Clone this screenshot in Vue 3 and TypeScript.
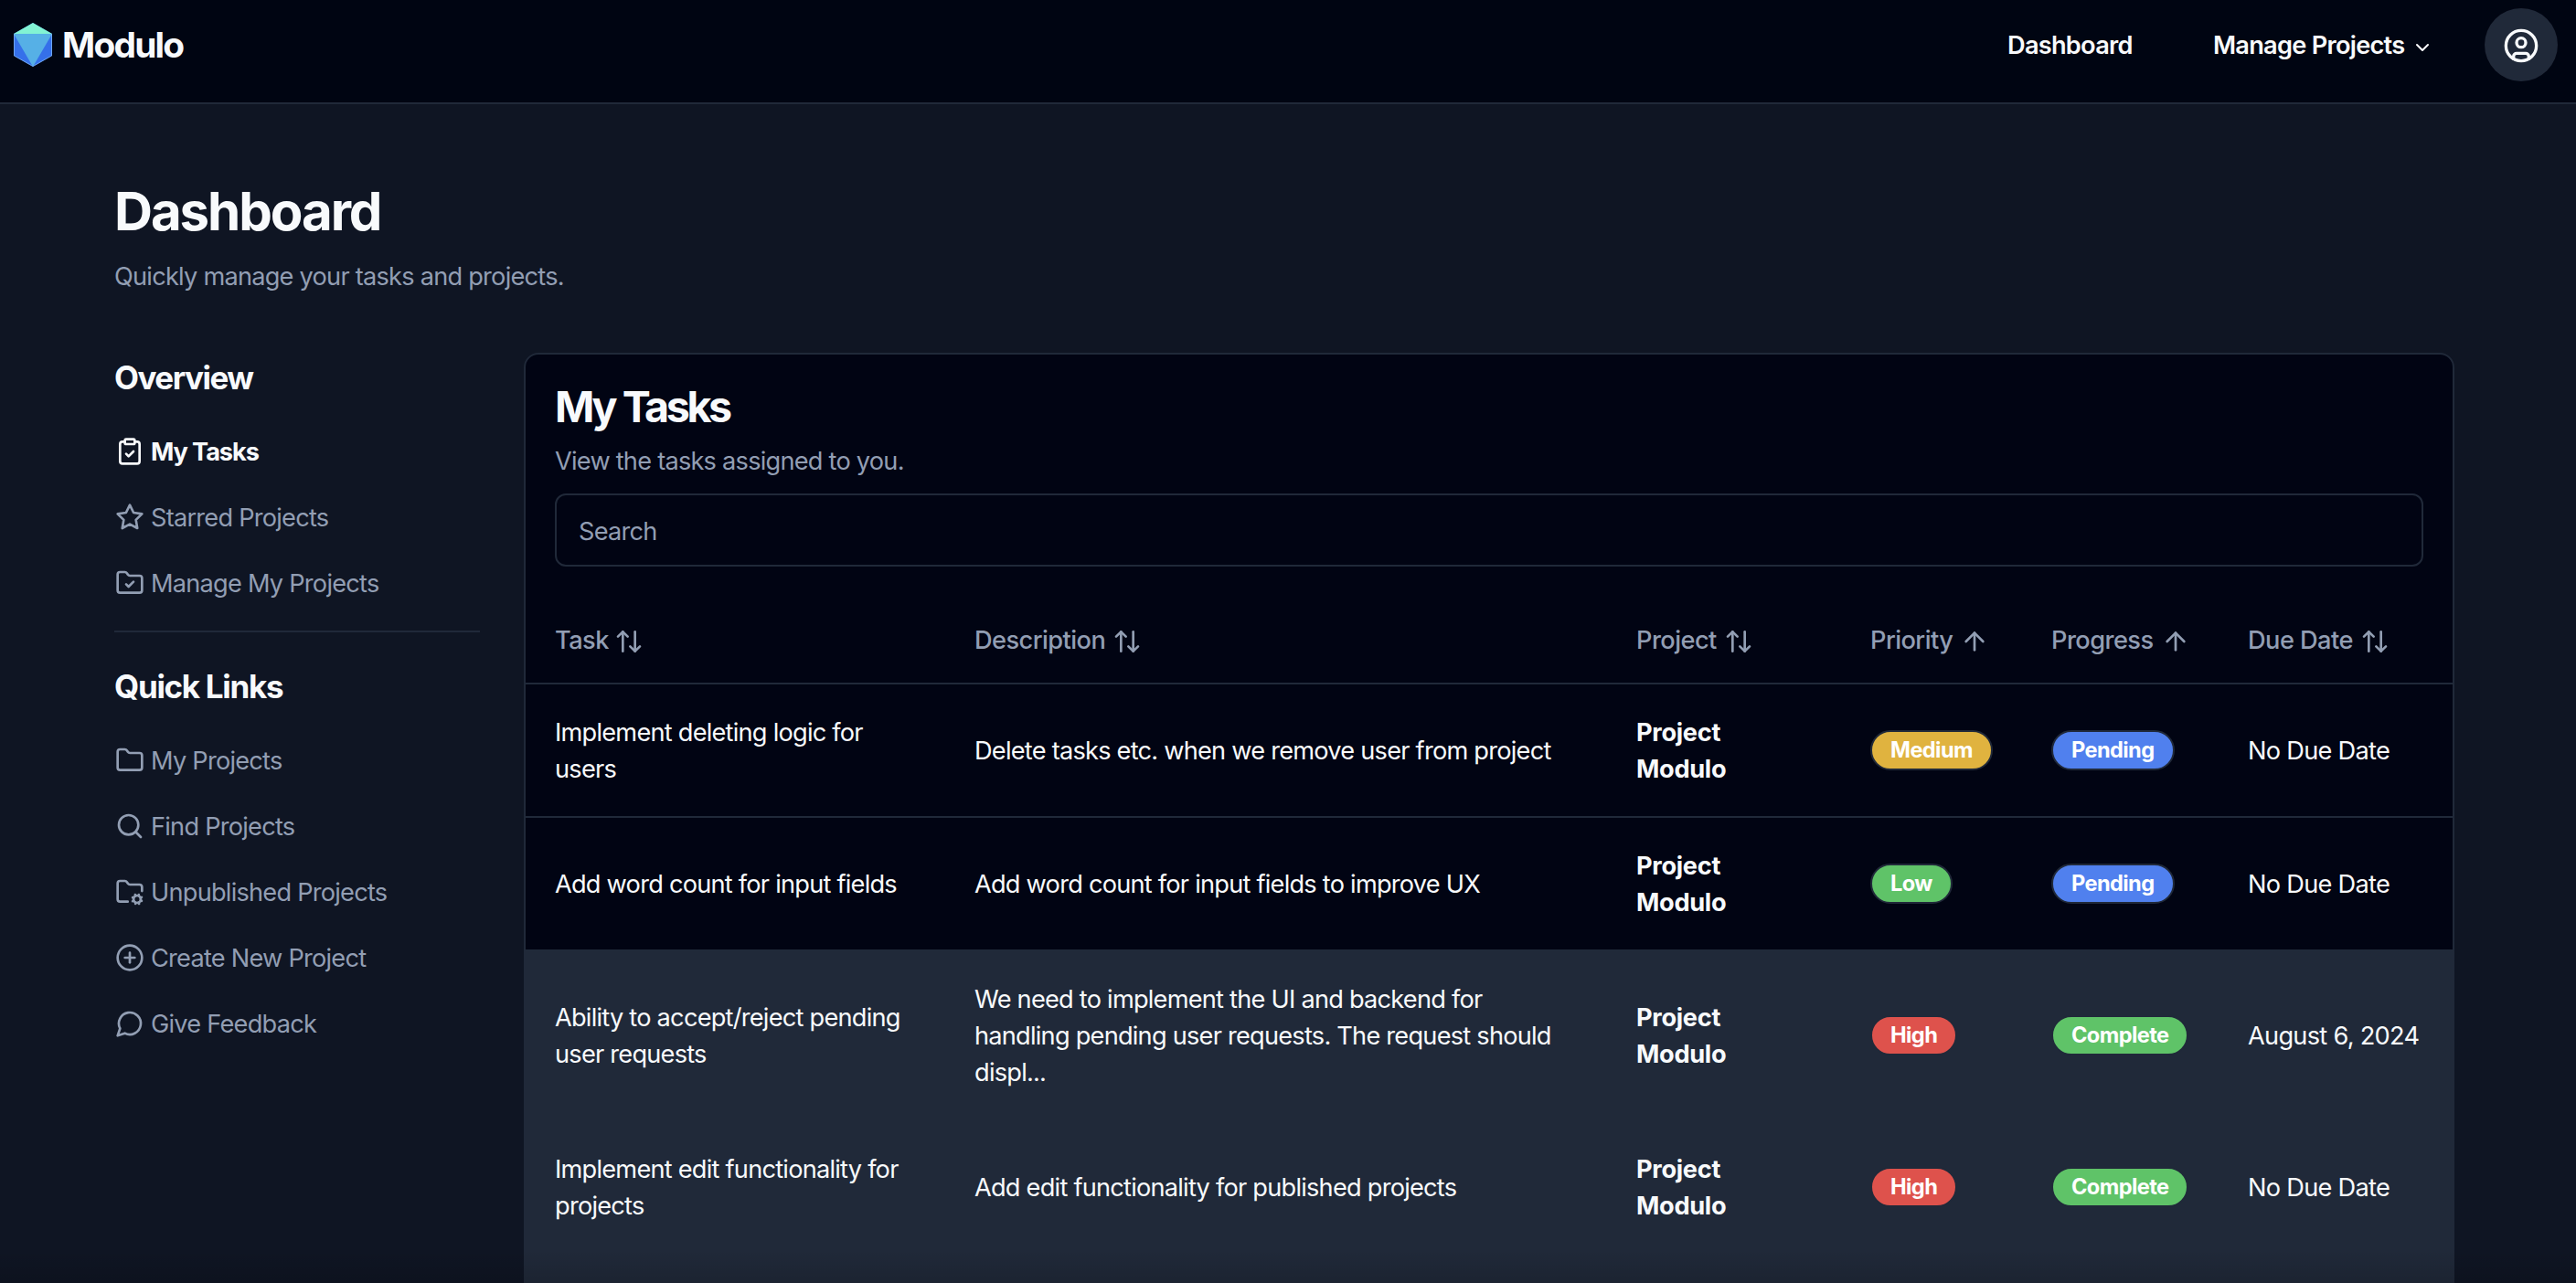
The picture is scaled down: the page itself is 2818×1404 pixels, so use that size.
<script setup lang="ts">
import { h, type FunctionalComponent } from 'vue'

type IconName =
  | 'clipboard' | 'star' | 'folderCheck' | 'folder' | 'search' | 'folderCog'
  | 'plus' | 'message' | 'sort' | 'up' | 'chevron' | 'user'

const shapes: Record<IconName, string> = {
  clipboard:
    '<rect width="8" height="4" x="8" y="2" rx="1" ry="1"/><path d="M16 4h2a2 2 0 0 1 2 2v14a2 2 0 0 1-2 2H6a2 2 0 0 1-2-2V6a2 2 0 0 1 2-2h2"/><path d="m9 14 2 2 4-4"/>',
  star: '<polygon points="12 2 15.09 8.26 22 9.27 17 14.14 18.18 21.02 12 17.77 5.82 21.02 7 14.14 2 9.27 8.91 8.26 12 2"/>',
  folderCheck:
    '<path d="M20 20a2 2 0 0 0 2-2V8a2 2 0 0 0-2-2h-7.9a2 2 0 0 1-1.69-.9L9.6 3.9A2 2 0 0 0 7.93 3H4a2 2 0 0 0-2 2v13a2 2 0 0 0 2 2Z"/><path d="m9 13 2 2 4-4"/>',
  folder:
    '<path d="M20 20a2 2 0 0 0 2-2V8a2 2 0 0 0-2-2h-7.9a2 2 0 0 1-1.69-.9L9.6 3.9A2 2 0 0 0 7.93 3H4a2 2 0 0 0-2 2v13a2 2 0 0 0 2 2Z"/>',
  search: '<circle cx="11" cy="11" r="8"/><path d="m21 21-4.3-4.3"/>',
  folderCog:
    '<circle cx="18" cy="18" r="3"/><path d="M10.3 20H4a2 2 0 0 1-2-2V5a2 2 0 0 1 2-2h3.9a2 2 0 0 1 1.69.9l.81 1.2a2 2 0 0 0 1.67.9H20a2 2 0 0 1 2 2v3.3"/><path d="m21.7 19.4-.9-.3"/><path d="m15.2 16.9-.9-.3"/><path d="m16.6 21.7.3-.9"/><path d="m19.1 15.2.3-.9"/><path d="m19.6 21.7-.4-1"/><path d="m16.8 15.3-.4-1"/><path d="m14.3 19.6 1-.4"/><path d="m20.7 16.8 1-.4"/>',
  plus: '<circle cx="12" cy="12" r="10"/><path d="M8 12h8"/><path d="M12 8v8"/>',
  message: '<path d="M7.9 20A9 9 0 1 0 4 16.1L2 22Z"/>',
  sort: '<path d="m21 16-4 4-4-4"/><path d="M17 20V4"/><path d="m3 8 4-4 4 4"/><path d="M7 4v16"/>',
  up: '<path d="m5 12 7-7 7 7"/><path d="M12 19V5"/>',
  chevron: '<path d="m6 9 6 6 6-6"/>',
  user: '<circle cx="12" cy="12" r="10"/><circle cx="12" cy="10" r="3"/><path d="M7 20.662V19a2 2 0 0 1 2-2h6a2 2 0 0 1 2 2v1.662"/>',
}

const Icon: FunctionalComponent<{ name: IconName; size?: number }> = (props) =>
  h('svg', {
    width: props.size ?? 32,
    height: props.size ?? 32,
    viewBox: '0 0 24 24',
    fill: 'none',
    stroke: 'currentColor',
    'stroke-width': 2,
    'stroke-linecap': 'round',
    'stroke-linejoin': 'round',
    innerHTML: shapes[props.name],
  })
Icon.props = ['name', 'size']

interface Link { icon: IconName; label: string; active?: boolean }
const overview: Link[] = [
  { icon: 'clipboard', label: 'My Tasks', active: true },
  { icon: 'star', label: 'Starred Projects' },
  { icon: 'folderCheck', label: 'Manage My Projects' },
]
const quickLinks: Link[] = [
  { icon: 'folder', label: 'My Projects' },
  { icon: 'search', label: 'Find Projects' },
  { icon: 'folderCog', label: 'Unpublished Projects' },
  { icon: 'plus', label: 'Create New Project' },
  { icon: 'message', label: 'Give Feedback' },
]

const columns: { label: string; icon: IconName; width: number }[] = [
  { label: 'Task', icon: 'sort', width: 459 },
  { label: 'Description', icon: 'sort', width: 724 },
  { label: 'Project', icon: 'sort', width: 256 },
  { label: 'Priority', icon: 'up', width: 198 },
  { label: 'Progress', icon: 'up', width: 215 },
  { label: 'Due Date', icon: 'sort', width: 256 },
]

interface Task {
  title: string[]
  description: string[]
  priority: 'Low' | 'Medium' | 'High'
  progress: 'Pending' | 'Complete'
  due: string
}
const tasks: Task[] = [
  {
    title: ['Implement deleting logic for', 'users'],
    description: ['Delete tasks etc. when we remove user from project'],
    priority: 'Medium', progress: 'Pending', due: 'No Due Date',
  },
  {
    title: ['Add word count for input fields'],
    description: ['Add word count for input fields to improve UX'],
    priority: 'Low', progress: 'Pending', due: 'No Due Date',
  },
  {
    title: ['Ability to accept/reject pending', 'user requests'],
    description: ['We need to implement the UI and backend for', 'handling pending user requests. The request should', 'displ...'],
    priority: 'High', progress: 'Complete', due: 'August 6, 2024',
  },
  {
    title: ['Implement edit functionality for', 'projects'],
    description: ['Add edit functionality for published projects'],
    priority: 'High', progress: 'Complete', due: 'No Due Date',
  },
]
</script>

<template>
  <div class="page">
    <header class="topbar">
      <a class="brand">
        <svg class="logo" width="42" height="48" viewBox="0 0 42 48">
          <polygon points="21,0 42,12 42,36 21,48 0,36 0,12" fill="#3570ea" />
          <polygon points="0,12 42,12 21,48" fill="#56b0e6" />
          <polygon points="21,0 42,12 0,12" fill="#82f3d3" />
          <polyline points="0.5,12 0.5,36 21,47.5 41.5,36 41.5,12" fill="none" stroke="#86bdf5" stroke-opacity=".7" />
        </svg>
        <span class="brand-name">Modulo</span>
      </a>
      <nav class="nav">
        <a class="nav-link first"><span>Dashboard</span></a>
        <a class="nav-link second"><span>Manage Projects</span><Icon class="chevron" name="chevron" :size="24" /></a>
        <button class="avatar"><Icon name="user" :size="40" /></button>
      </nav>
    </header>

    <main class="main">
      <h1 class="title">Dashboard</h1>
      <p class="subtitle">Quickly manage your tasks and projects.</p>
      <div class="columns">
        <aside class="sidebar">
          <h2 class="side-title overview">Overview</h2>
          <a v-for="l in overview" :key="l.label" class="side-link" :class="{ active: l.active }">
            <Icon :name="l.icon" /><span>{{ l.label }}</span>
          </a>
          <div class="separator"></div>
          <h2 class="side-title quick">Quick Links</h2>
          <a v-for="l in quickLinks" :key="l.label" class="side-link">
            <Icon :name="l.icon" /><span>{{ l.label }}</span>
          </a>
        </aside>

        <section class="card">
          <div class="card-head">
            <h2 class="card-title">My Tasks</h2>
            <p class="card-sub">View the tasks assigned to you.</p>
            <div class="search">Search</div>
          </div>
          <table class="table">
            <colgroup>
              <col v-for="c in columns" :key="c.label" :style="{ width: c.width + 'px' }" />
            </colgroup>
            <thead>
              <tr>
                <th v-for="c in columns" :key="c.label">
                  <div class="th"><span>{{ c.label }}</span><Icon :name="c.icon" /></div>
                </th>
              </tr>
            </thead>
            <tbody>
              <tr v-for="t in tasks" :key="t.title[0]" :class="{ done: t.progress === 'Complete' }">
                <td><div v-for="s in t.title" :key="s">{{ s }}</div></td>
                <td><div v-for="s in t.description" :key="s">{{ s }}</div></td>
                <td class="project"><div>Project</div><div>Modulo</div></td>
                <td class="tag"><span class="badge" :class="t.priority.toLowerCase()">{{ t.priority }}</span></td>
                <td class="tag"><span class="badge" :class="t.progress.toLowerCase()">{{ t.progress }}</span></td>
                <td class="due">{{ t.due }}</td>
              </tr>
            </tbody>
          </table>
          <div class="more"></div>
        </section>
      </div>
    </main>
  </div>
</template>

<style>
body {
  background: #0f1523;
}
</style>

<style scoped>
.page {
  position: relative;
  width: 2818px;
  height: 1404px;
  overflow: hidden;
  background: #0f1523;
  color: #f8fafc;
  font-family: Inter, 'Liberation Sans', sans-serif;
  font-size: 27.2px;
  font-weight: 440;
  line-height: 40px;
  letter-spacing: -0.77px;
}
.page::after {
  content: '';
  position: absolute;
  inset: auto 0 0;
  height: 36px;
  background: linear-gradient(transparent, rgba(0, 0, 0, 0.14));
}
h1, h2, p {
  margin: 0;
}
svg {
  display: block;
  flex: none;
}
.topbar {
  box-sizing: border-box;
  height: 114px;
  padding: 9px 20px 0 15px;
  display: flex;
  justify-content: space-between;
  align-items: flex-start;
  background: #000512;
  border-bottom: 2px solid #202939;
}
.brand {
  height: 80px;
  display: flex;
  align-items: center;
}
.brand-name {
  margin-left: 11px;
  font-size: 38.8px;
  font-weight: 700;
  letter-spacing: -1.75px;
}
.nav {
  height: 80px;
  display: flex;
  align-items: center;
  font-weight: 560;
  letter-spacing: -0.74px;
}
.nav-link {
  display: flex;
  align-items: center;
  white-space: nowrap;
}
.nav-link span {
  padding-top: 2px;
}
.first {
  width: 225px;
}
.second {
  width: 297px;
}
.chevron {
  margin: 6px 0 0 8px;
}
.avatar {
  width: 80px;
  height: 80px;
  padding: 2px 0 0;
  border: 0;
  border-radius: 50%;
  background: #202939;
  color: #f8fafc;
  display: flex;
  align-items: center;
  justify-content: center;
}
.main {
  padding: 77px 133px 0 125px;
}
.title {
  height: 80px;
  line-height: 80px;
  font-size: 58.2px;
  font-weight: 650;
  letter-spacing: -2.1px;
}
.subtitle {
  margin-top: 12px;
  color: #929eb3;
}
.columns {
  margin-top: 63px;
  display: flex;
  gap: 48px;
}
.sidebar {
  width: 400px;
}
.side-title {
  height: 52px;
  line-height: 52px;
  font-size: 35px;
  font-weight: 650;
  letter-spacing: -1.3px;
}
.overview {
  padding-top: 1px;
  margin-bottom: 19px;
  letter-spacing: -1.5px;
}
.quick {
  margin: 33px 0 19px;
}
.side-link {
  height: 72px;
  display: flex;
  align-items: center;
  padding-left: 1px;
  gap: 7px;
  color: #929eb3;
  white-space: nowrap;
}
.side-link span {
  padding-top: 2px;
}
.side-link.active {
  color: #f8fafc;
  font-weight: 700;
  letter-spacing: -1.1px;
}
.separator {
  height: 2px;
  margin-top: 16px;
  background: #202939;
}
.card {
  box-sizing: border-box;
  width: 2112px;
  border: 2px solid #202939;
  border-radius: 16px;
  background: #010413;
  overflow: hidden;
}
.card-head {
  padding: 33px 32px 31px;
}
.card-title {
  height: 48px;
  line-height: 48px;
  font-size: 46.6px;
  font-weight: 650;
  letter-spacing: -3.4px;
  word-spacing: 1px;
}
.card-sub {
  margin: 16px 0 15px;
  color: #929eb3;
}
.search {
  box-sizing: border-box;
  height: 80px;
  padding: 0 24px;
  border: 2px solid #202939;
  border-radius: 12px;
  color: #929eb3;
  line-height: 79px;
}
.table {
  table-layout: fixed;
  width: 2108px;
  border-collapse: separate;
  border-spacing: 0;
}
th,
td {
  padding: 0 0 0 32px;
  text-align: left;
  vertical-align: middle;
  white-space: nowrap;
  border-bottom: 2px solid #202939;
}
th {
  height: 96px;
  color: #929eb3;
  font-weight: 520;
  letter-spacing: -0.55px;
}
.th {
  display: flex;
  align-items: center;
  gap: 8px;
}
.th span {
  padding-top: 4px;
}
.th svg {
  position: relative;
  top: 3px;
}
th:first-child .th {
  gap: 6px;
}
td {
  padding-top: 33px;
  padding-bottom: 31px;
  height: 80px;
}
.tag {
  padding-top: 32px;
  padding-bottom: 32px;
}
.done td,
.more {
  background: #202939;
}
.more {
  height: 60px;
}
.project {
  font-weight: 700;
  letter-spacing: -0.3px;
}
.due {
  letter-spacing: -0.72px;
}
.badge {
  box-sizing: border-box;
  display: block;
  width: fit-content;
  height: 44px;
  padding: 0 20px;
  border: 2px solid #202939;
  border-radius: 22px;
  color: #fff;
  font-size: 23.6px;
  font-weight: 700;
  line-height: 39px;
  letter-spacing: -0.6px;
}
.medium { background: #e0b33f; }
.low, .complete { background: #5fc368; }
.pending { background: #5080ee; }
.high { background: #de524c; }
</style>
